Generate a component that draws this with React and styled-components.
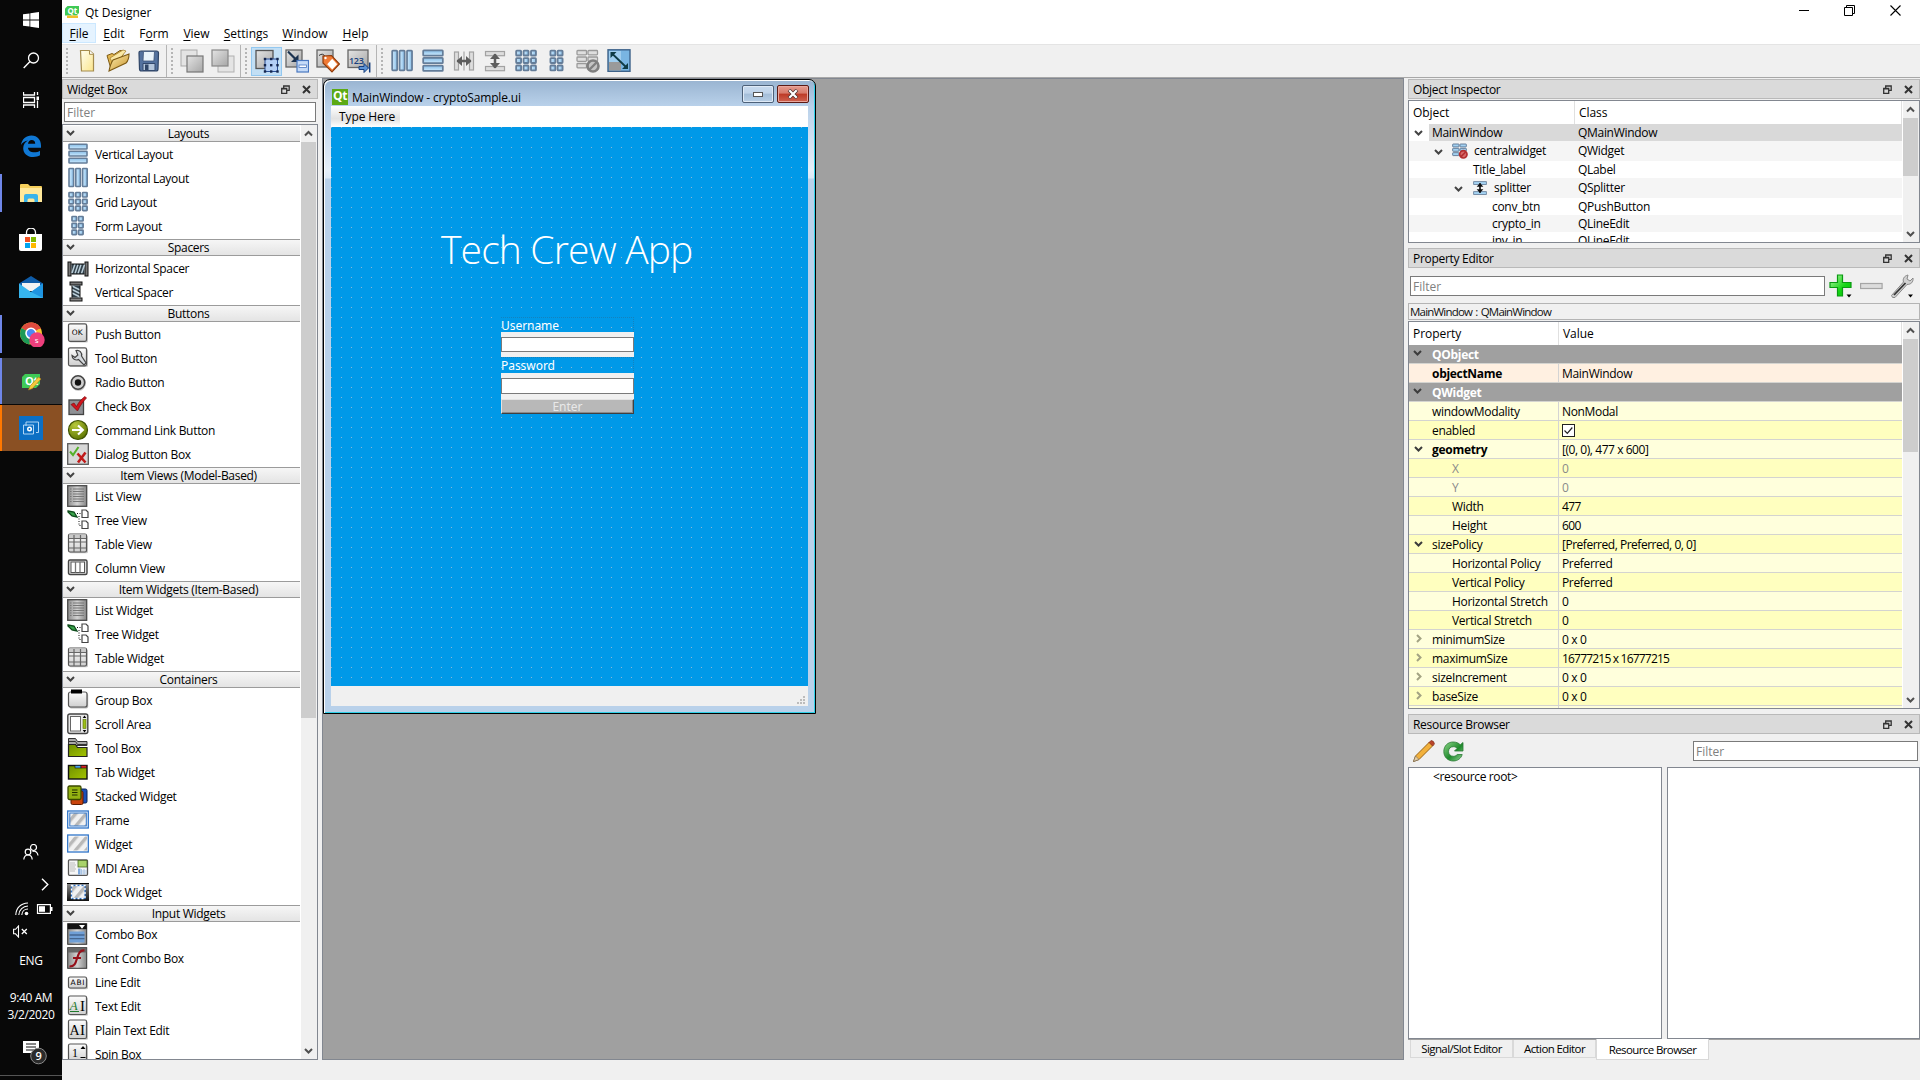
import React from "react";
import styled, { createGlobalStyle, css } from "styled-components";

const UI = `"Open Sans", "Noto Sans", sans-serif`;

const GlobalStyle = createGlobalStyle`
  *, *::before, *::after { box-sizing: border-box; }
  html, body { margin: 0; padding: 0; background: #f0f0f0; overflow: hidden; }
  body { font-family: ${UI}; font-size: 12px; letter-spacing: -0.3px; color: #000; line-height: 16px; }
  svg { display: block; flex: none; }
`;

/* ---------- shared svg gradients ---------- */
const Defs = () => (
  <svg width="0" height="0">
    <defs>
      <linearGradient id="bar" x1="0" y1="0" x2="0" y2="1">
        <stop offset="0" stopColor="#86bce6" /><stop offset="1" stopColor="#cdebff" />
      </linearGradient>
      <linearGradient id="barH" x1="0" y1="0" x2="1" y2="0">
        <stop offset="0" stopColor="#d3edff" /><stop offset="1" stopColor="#86bce6" />
      </linearGradient>
      <linearGradient id="grey" x1="0" y1="0" x2="1" y2="1">
        <stop offset="0" stopColor="#e4e4e4" /><stop offset="1" stopColor="#a6a6a6" />
      </linearGradient>
      <linearGradient id="light" x1="0" y1="0" x2="0" y2="1">
        <stop offset="0" stopColor="#fdfdfd" /><stop offset="1" stopColor="#cfcfcf" />
      </linearGradient>
      <linearGradient id="gold" x1="0" y1="0" x2="1" y2="1">
        <stop offset="0" stopColor="#fdeeb0" /><stop offset="1" stopColor="#c8922a" />
      </linearGradient>
      <linearGradient id="page" x1="0" y1="0" x2="1" y2="1">
        <stop offset="0" stopColor="#fffef0" /><stop offset="1" stopColor="#fbe58c" />
      </linearGradient>
      <linearGradient id="green" x1="0" y1="0" x2="1" y2="1">
        <stop offset="0" stopColor="#8fd88a" /><stop offset="0.55" stopColor="#1f8a2c" /><stop offset="1" stopColor="#9ad79a" />
      </linearGradient>
      <linearGradient id="plus" x1="0" y1="0" x2="1" y2="1">
        <stop offset="0" stopColor="#b6f5a8" /><stop offset="0.6" stopColor="#15d615" /><stop offset="1" stopColor="#06b806" />
      </linearGradient>
      <linearGradient id="olive" x1="0" y1="0" x2="1" y2="1">
        <stop offset="0" stopColor="#6f8f00" /><stop offset="1" stopColor="#a3c400" />
      </linearGradient>
      <linearGradient id="listGrey" x1="0" y1="0" x2="1" y2="0">
        <stop offset="0" stopColor="#8c8c8c" /><stop offset="0.5" stopColor="#d2d2d2" /><stop offset="1" stopColor="#858585" />
      </linearGradient>
      <linearGradient id="dark" x1="0" y1="0" x2="0" y2="1">
        <stop offset="0" stopColor="#8e8e8e" /><stop offset="1" stopColor="#111" />
      </linearGradient>
      <radialGradient id="olivBall" cx="0.35" cy="0.25" r="0.8">
        <stop offset="0" stopColor="#b6c83a" /><stop offset="1" stopColor="#5c7300" />
      </radialGradient>
      <pattern id="stripe" width="8" height="8" patternUnits="userSpaceOnUse" patternTransform="rotate(40)">
        <rect width="8" height="8" fill="#f1f1f1" /><rect width="3.4" height="8" fill="#b8b8b8" />
      </pattern>
    </defs>
  </svg>
);

/* ---------- layout glyphs ---------- */
const EDGE = "#647d99";
const LayV = ({ s = 22 }) => (
  <svg width={s} height={s} viewBox="0 0 22 22">
    {[1.2, 8.2, 15.2].map((y) => <rect key={y} x="2" y={y} width="18" height="4.8" rx="0.6" fill="url(#bar)" stroke={EDGE} strokeWidth="1.600" />)}
  </svg>
);
const LayH = ({ s = 22 }) => (
  <svg width={s} height={s} viewBox="0 0 22 22">
    {[2, 8.8, 15.6].map((x) => <rect key={x} x={x} y="1.500" width="4.600" height="18" rx="0.600" fill="url(#barH)" stroke={EDGE} strokeWidth="1.600" />)}
  </svg>
);
const cells = (xs) => xs.flatMap((x) => [1.5, 8.3, 15.1].map((y) => (
  <rect key={x + "-" + y} x={x} y={y} width="4.500" height="4.500" rx="0.600" fill="url(#barH)" stroke={EDGE} strokeWidth="1.700" />
)));
const LayGrid = ({ s = 22 }) => <svg width={s} height={s} viewBox="0 0 22 22">{cells([2, 8.8, 15.6])}</svg>;
const LayForm = ({ s = 22 }) => <svg width={s} height={s} viewBox="0 0 22 22">{cells([5, 11.6])}</svg>;

/* ---------- widget box icons ---------- */
const I = ({ children }) => <svg width="22" height="22" viewBox="0 0 22 22">{children}</svg>;

const HSpacer = () => (
  <I>
    <rect x="1" y="5" width="3" height="14" fill="#777" stroke="#111" /><rect x="18" y="5" width="3" height="14" fill="#777" stroke="#111" />
    <rect x="4.5" y="7" width="13" height="10" fill="#31404a" />
    <path d="M5 16l3-9M8 16.500l3-9M11 16.500l3-9M14.500 16.500l3-9" stroke="#b9cdd8" strokeWidth="1.5" />
    <path d="M4.500 7h13M4.500 17h13" stroke="#111" />
  </I>
);
const VSpacer = () => (
  <I>
    <rect x="3" y="1" width="12" height="3" fill="#777" stroke="#111" /><rect x="3" y="17" width="12" height="3" fill="#888" stroke="#111" />
    <rect x="5" y="4.500" width="8" height="12" fill="#31404a" />
    <path d="M5 5l8 4M5 8.500l8 4M5 12l8 4" stroke="#b9cdd8" strokeWidth="1.5" />
    <path d="M5 4.500v12M13 4.500v12" stroke="#111" />
  </I>
);
const Plate = ({ y = 1, h = 18.5 }) => (
  <>
    <rect x="2.500" y={y + 1.200} width="18.500" height={h} rx="1.500" fill="#00000038" />
    <rect x="1.500" y={y} width="18" height={h} rx="1.500" fill="url(#light)" stroke="#555" strokeWidth="1.200" />
  </>
);
const svgText = (t, x, y, size, extra = {}) => (
  <text x={x} y={y} fontSize={size} fontFamily="Liberation Serif, serif" letterSpacing="0" {...extra}>{t}</text>
);
const PushI = () => <I><Plate y={0.8} h={17.500} />{svgText("OK", 4.800, 12.300, 7.500, { fontFamily: "DejaVu Sans, sans-serif" })}</I>;
const WrenchI = () => (
  <I><Plate y={0.800} h={18} />
    <path d="M9 3.500a4.500 4.500 0 0 1 5.500 5.500l4.500 7-2 2-5.500-5.500a4.500 4.500 0 0 1-6.500-4l3 2 2.800-2.500z" fill="#d5d9dd" stroke="#444" strokeWidth="1.200" />
  </I>
);
const RadioI = () => (
  <I><circle cx="11.500" cy="12.500" r="7.500" fill="#0003" /><circle cx="11" cy="11.500" r="6.700" fill="#cfcfcf" stroke="#444" strokeWidth="1.600" /><circle cx="11" cy="11.500" r="3.200" fill="#111" /></I>
);
const CheckI = () => (
  <I><rect x="2" y="5" width="14.500" height="14.500" fill="#8e9094" stroke="#444" strokeWidth="1.300" />
    <path d="M4 9.500l3-1.500 2.500 3.500C12 6.500 15 3.500 18 1.500l1.500 1.500C16 6.500 13 11 10.500 16z" fill="#d1141c" stroke="#7b0a0e" strokeWidth="0.700" /></I>
);
const CommandI = () => (
  <I><circle cx="11" cy="11" r="9.500" fill="url(#olivBall)" stroke="#3f5200" strokeWidth="1.200" />
    <path d="M5 11h10M11 6.500l4.800 4.500-4.800 4.500" fill="none" stroke="#fff" strokeWidth="2.200" /></I>
);
const DialogI = () => (
  <I><rect x="0.700" y="0.700" width="20.600" height="20.600" fill="#d8d8d8" stroke="#5a5a5a" strokeWidth="1.300" />
    <path d="M3 8.500l3 3.500 5.500-8" fill="none" stroke="#55b02a" strokeWidth="2" />
    <path d="M10.500 10.500l8 9M18.500 9.500l-7.500 10" stroke="#c01a1a" strokeWidth="2.600" /></I>
);
const ListI = () => (
  <I><rect x="0.700" y="0.700" width="19" height="20.600" fill="url(#listGrey)" stroke="#4a4a4a" strokeWidth="1.300" />
    {[4, 6.500, 9, 11.500, 14, 16.500].map((y) => <path key={y} d={`M3 ${y}h1.500M6 ${y}h11`} stroke="#777" />)}</I>
);
const TreeI = () => (
  <I><path d="M1 2l6 1 3 5-5-1-4-4z" fill="#39a34a" stroke="#0d4a1b" strokeWidth="1.300" />
    <path d="M10 4.500h5M12 7v9.500h3" stroke="#111" strokeDasharray="1 1.500" fill="none" />
    <path d="M15 1h4l2 2v5.500h-6zM15 12h4l2 2v5.500h-6z" fill="#fff" stroke="#444" strokeWidth="1.200" /></I>
);
const TableI = () => (
  <I><Plate y={1} h={18} /><rect x="2" y="1.500" width="17" height="4" fill="#c9c9c9" />
    <path d="M2 5.500h17M2 9h17M2 15h17M7 2v17M13.500 2v17" stroke="#666" strokeWidth="1.200" /></I>
);
const ColumnI = () => (
  <I><rect x="1.500" y="3" width="18.500" height="14.500" rx="1.500" fill="#ddd" stroke="#444" strokeWidth="1.400" />
    <rect x="4" y="5" width="13.500" height="10.500" fill="#fff" stroke="#555" /><path d="M8.500 5v10.500M13 5v10.500" stroke="#777" strokeWidth="1.300" /></I>
);
const GroupI = () => (
  <I><rect x="2.200" y="4" width="19" height="15.500" rx="2" fill="#0004" /><rect x="1.500" y="3" width="18.500" height="15" rx="2" fill="url(#light)" stroke="#555" strokeWidth="1.200" /><rect x="4" y="0.500" width="11" height="4" fill="#000" /></I>
);
const ScrollI = () => (
  <I><rect x="0.800" y="1" width="20" height="19.500" rx="2" fill="#e8e8e8" stroke="#444" strokeWidth="1.400" />
    <rect x="3.500" y="3.500" width="10" height="14.500" fill="#fff" stroke="#666" />
    <rect x="16" y="6.500" width="3" height="9" fill="#9cbf1a" stroke="#587000" strokeWidth="0.600" />
    <path d="M15.700 5l1.800-2.500 1.800 2.500zM15.700 17l1.800 2.500 1.800-2.500z" fill="#000" /></I>
);
const ToolBoxI = () => (
  <I><path d="M1.500 1.500h7l2 3h9.500v4h-18.500z" fill="#aaa" stroke="#333" /><path d="M1.500 4.500h7l2 3h9.500" fill="none" stroke="#333" />
    <path d="M1.500 7.500h7l2 3h9.500v9h-18.500z" fill="url(#olive)" stroke="#222" strokeWidth="1.200" /></I>
);
const TabI = () => (
  <I><rect x="1.500" y="4.500" width="18.500" height="13.500" fill="url(#olive)" stroke="#111" strokeWidth="1.400" />
    <rect x="8" y="4.500" width="6" height="2.500" fill="#4aa3ea" stroke="#111" strokeWidth="0.600" /><rect x="14" y="4.500" width="5.500" height="2.500" fill="#d62020" stroke="#111" strokeWidth="0.600" /></I>
);
const StackI = () => (
  <I><rect x="9" y="4" width="11" height="14" rx="1.500" fill="#1b4fb8" stroke="#0a2357" /><rect x="4" y="6" width="12" height="13.500" rx="1.500" fill="#c9430c" stroke="#5c1c00" />
    <rect x="1" y="1" width="13" height="13.500" rx="1.500" fill="#93b312" stroke="#3b4a00" strokeWidth="1.300" /><path d="M5 5h5.500M5 7.500h5.500M5 10h5.500" stroke="#223000" strokeWidth="1.200" /></I>
);
const FrameI = () => (
  <I><rect x="0.700" y="2" width="20.600" height="17" fill="#fff" stroke="#2f74c8" strokeWidth="1.300" /><rect x="2.800" y="4" width="16.500" height="13" fill="url(#stripe)" stroke="#2f74c8" /></I>
);
const WidgetI = () => (
  <I><rect x="0.700" y="2" width="20.600" height="17" fill="#fff" stroke="#2f74c8" strokeWidth="1.300" /><rect x="2" y="3.500" width="18" height="14" fill="url(#stripe)" /></I>
);
const MdiI = () => (
  <I><rect x="1.500" y="2.800" width="19" height="15.500" rx="1" fill="#f6f6f6" stroke="#555" strokeWidth="1.300" />
    <rect x="11" y="3.500" width="9" height="6.500" fill="#a9d36a" stroke="#4a6a24" strokeWidth="0.800" /><path d="M3 6h5M3 8h6M3 10h5M3 12h6M3 14h5" stroke="#bbb" />
    <rect x="11" y="11.500" width="2.500" height="6" fill="#7fa9dd" /><path d="M14.500 12v6M17 12v6M14 14h6M14 16h6" stroke="#9fbde0" strokeWidth="0.800" /></I>
);
const DockI = () => (
  <I><rect x="0" y="2" width="22" height="18" fill="url(#dark)" /><path d="M0 2.500h22" stroke="#000" /><rect x="4.500" y="4.500" width="13.500" height="13" fill="url(#stripe)" stroke="#2f74c8" strokeWidth="1.200" />
    <rect x="4.500" y="4.500" width="13.500" height="13" fill="none" stroke="#fff" strokeWidth="1.300" strokeDasharray="2 2" /></I>
);
const ComboI = () => (
  <I><rect x="0.700" y="0.700" width="19" height="20.600" fill="url(#listGrey)" stroke="#333" /><rect x="0.700" y="0.700" width="19" height="5.500" fill="#111" /><path d="M12 2h6l-3 3.800z" fill="#fff" />
    <rect x="2.500" y="8.500" width="15" height="11" fill="#6f9fd6" /><path d="M2.500 12h15M2.500 15.700h15" stroke="#456791" strokeWidth="1.300" /></I>
);
const FontI = () => (
  <I><rect x="0.700" y="0.700" width="19" height="20.600" fill="url(#listGrey)" stroke="#333" /><rect x="1" y="1" width="18.500" height="4.500" fill="#666" />
    <path d="M2.500 19.500c5 0 6-3 7.500-8s3-8.500 7.500-8M6 11h8" fill="none" stroke="#96101a" strokeWidth="2.200" /></I>
);
const LineEditI = () => (
  <I><Plate y={6} h={11} />{svgText("ABI", 3.500, 14.300, 7.500, { fontFamily: "DejaVu Sans, sans-serif", textLength: 14 })}</I>
);
const TextI = () => <I><Plate y={1} />{svgText("A", 2.800, 14.500, 13, { fill: "#1f7a2c", fontStyle: "italic" })}<path d="M3 16.500h9" stroke="#1f7a2c" />{svgText("I", 13, 15.500, 15)}</I>;
const PlainI = () => <I><Plate y={1} />{svgText("A", 2.500, 15.500, 14)}{svgText("I", 13, 15.500, 15)}</I>;
const SpinI = () => <I><Plate y={1} />{svgText("1", 5, 13.500, 12)}<path d="M13.500 6h5l-2.500-3z" fill="#000" /><path d="M13.500 14.500h5" stroke="#000" /></I>;

/* ---------- toolbar icons ---------- */
const T = ({ children }) => <svg width="24" height="24" viewBox="0 0 24 24">{children}</svg>;
const NewI = () => <T><path d="M5.500 1.500h9l4 3.500v17h-12z" fill="url(#page)" stroke="#a48b4e" strokeWidth="1.200" /><path d="M14.500 1.500v3.800h4" fill="#fff" stroke="#a48b4e" /></T>;
const OpenI = () => (
  <T><path d="M1 6.500l5-2 2 1 6-4 3 .5v4L5 20z" fill="#e2b650" stroke="#7d5a14" /><path d="M4 9l13-8 3 1-12 15z" fill="#f9e7a4" stroke="#a17a24" strokeWidth="0.700" />
    <path d="M3 22c1-5 2-8 4-11l16-6c0 4-1 7-3 9z" fill="url(#gold)" stroke="#7d5a14" strokeWidth="1.100" /></T>
);
const SaveI = () => (
  <T><path d="M2 4q0-2 2-2h15.500q2 0 2 2l-.5 16q0 2-2 2H4.500q-2 0-2-2z" fill="#54729f" stroke="#2f4567" strokeWidth="1.200" />
    <path d="M6.500 2.500h11l-.6 9.500H6z" fill="#e9f3fb" stroke="#3c5479" strokeWidth="0.800" /><path d="M6 14.500h12v7H6z" fill="#b4c6dc" stroke="#33496d" /><rect x="8" y="15.500" width="3.500" height="5.500" fill="#2f4567" /></T>
);
const FrontI = () => <T><rect x="1" y="1" width="16" height="16" fill="#e4e4e4" stroke="#a9a9a9" /><rect x="7" y="7" width="16" height="16" fill="url(#grey)" stroke="#777" strokeWidth="1.200" /></T>;
const BackI = () => <T><rect x="7" y="7" width="16" height="16" fill="#e4e4e4" stroke="#b0b0b0" /><rect x="1" y="1" width="16" height="16" fill="url(#grey)" stroke="#888" strokeWidth="1.200" /></T>;
const EditWI = () => (
  <T><rect x="1" y="1.500" width="17" height="18" fill="url(#grey)" stroke="#555" strokeWidth="1.300" /><rect x="10" y="10" width="12.500" height="12.500" fill="#b3cff5" stroke="#2a4f93" />
    {[[10, 10], [16.2, 10], [22.5, 10], [10, 16.2], [16.2, 16.2], [22.5, 16.2], [10, 22.5], [16.2, 22.5], [22.5, 22.5]].map(([x, y]) => <rect key={x + "," + y} x={x - 1.2} y={y - 1.2} width="2.400" height="2.400" fill="#14264e" />)}</T>
);
const SignalI = () => (
  <T><rect x="1" y="1" width="16" height="17" fill="url(#grey)" stroke="#666" strokeWidth="1.300" /><path d="M3 2.500l8.500 8.500" stroke="#1c3350" strokeWidth="2.200" /><path d="M13.500 13V5.500L6 13z" fill="#1c3350" />
    <rect x="12" y="11.500" width="11.500" height="11.500" fill="#c5dbf8" stroke="#4a78c0" strokeWidth="1.200" /><rect x="14" y="16" width="7.500" height="2.500" fill="#fff" stroke="#4a78c0" strokeWidth="0.800" /></T>
);
const BuddyI = () => (
  <T><rect x="1" y="1" width="16" height="17" fill="url(#grey)" stroke="#666" strokeWidth="1.300" /><path d="M3 6.500q4-3 6 1" fill="none" stroke="#333" /><path d="M7 7l8.500-.5 8 8.500-7.500 8-9-9z" fill="#f07a35" stroke="#8c3a0c" strokeWidth="1.200" /><path d="M16.200 9.800l5 5.400-5 5.400-5-5.400z" fill="#fff" /><circle cx="9.500" cy="9" r="1.200" fill="#fff" /></T>
);
const TabOrderI = () => (
  <T><rect x="1" y="1" width="20" height="17.500" fill="url(#grey)" stroke="#666" strokeWidth="1.300" /><text x="2" y="14.500" fontSize="9" fontWeight="600" letterSpacing="-0.300" fontFamily="Open Sans, sans-serif" fill="#173f7e">123</text>
    <path d="M12 17.500h5v-3l4.500 4.500-4.500 4.500v-3h-5z" fill="#5b93d6" stroke="#173f7e" /><path d="M22.700 13.500v10" stroke="#173f7e" strokeWidth="1.500" /></T>
);
const SplitHI = () => (
  <T><rect x="2.500" y="3" width="4" height="18" fill="#ddd" stroke="#a2a2a2" strokeWidth="1.200" /><rect x="17.500" y="3" width="4" height="18" fill="#ddd" stroke="#a2a2a2" strokeWidth="1.200" />
    <path d="M12 2.500v19" stroke="#c4c4c4" strokeWidth="2" /><path d="M5 12h14" stroke="#5d5d5d" strokeWidth="2.500" /><path d="M10 7v10l-5.500-5zM14 7v10l5.500-5z" fill="#5d5d5d" /></T>
);
const SplitVI = ({ s = 24, blue }) => (
  <svg width={s} height={s} viewBox="0 0 24 24"><rect x="2.500" y="2.500" width="19" height="4.200" fill={blue ? "#a4d2f2" : "#ddd"} stroke={blue ? "#5f7894" : "#a2a2a2"} strokeWidth="1.200" /><rect x="2.500" y="17.500" width="19" height="4.200" fill={blue ? "#a4d2f2" : "#ddd"} stroke={blue ? "#5f7894" : "#a2a2a2"} strokeWidth="1.200" />
    <path d="M12 5v14" stroke={blue ? "#111" : "#5d5d5d"} strokeWidth="2.500" /><path d="M7 10h10l-5-5.500zM7 14h10l-5 5.500z" fill={blue ? "#111" : "#5d5d5d"} /></svg>
);
const BreakI = ({ s = 24, color }) => (
  <svg width={s} height={s} viewBox="0 0 24 24">
    {[[1, 1.500], [12, 1.500], [1, 8], [12, 8], [1, 14.500]].map(([x, y]) => <rect key={x + "," + y} x={x} y={y} width="9.500" height="4.400" rx="0.800" fill={color ? "#a4d2f2" : "#dedede"} stroke={color ? "#56708f" : "#9a9a9a"} strokeWidth="1.300" />)}
    <circle cx="17" cy="17" r="5.500" fill={color ? "#d86a6a" : "#c4c4c4"} stroke={color ? "#b32f2f" : "#7f7f7f"} strokeWidth="2.600" /><path d="M13.500 20.500l7-7" stroke={color ? "#b32f2f" : "#7f7f7f"} strokeWidth="2.400" />
  </svg>
);
const AdjustI = () => (
  <T><rect x="1" y="0.800" width="22" height="21.500" fill="#79b5e2" stroke="#3d6289" strokeWidth="1.400" /><rect x="2" y="13" width="12" height="8.500" fill="#9a9a9a" /><rect x="2" y="2" width="12" height="11" fill="#9fcdee" />
    <path d="M5 4.500l14.500 14" stroke="#0f3b45" strokeWidth="1.800" /><path d="M3.500 3v6l6-6zM21 20v-6l-6 6z" fill="#0f3b45" /></T>
);

/* ---------- small shared parts ---------- */
const Chevron = ({ dir = "down", color = "#444", s = 9, w = 2 }) => {
  const d = { down: "M1 3l3.500 3.500L8 3", up: "M1 6.500l3.500-3.500L8 6.500", right: "M3 1l3.500 3.500L3 8" }[dir];
  return <svg width={s} height={s} viewBox="0 0 9 9"><path d={d} fill="none" stroke={color} strokeWidth={w} /></svg>;
};

const Bar = styled.div`
  width: 16px; flex: none; background: #f0f0f0; display: flex; flex-direction: column; margin-left: 1px;
`;
const BarEnd = styled.div`
  height: 17px; flex: none; display: flex; align-items: center; justify-content: center; padding-right: 2px;
`;
const Thumb = styled.div`height: ${(p) => p.$h}px; background: #cdcdcd; margin-right: 1px;`;
const Spring = styled.div`flex: 1;`;
const ScrollBar = ({ thumb }) => (
  <Bar><BarEnd><Chevron dir="up" color="#505050" /></BarEnd><Thumb $h={thumb} /><Spring /><BarEnd><Chevron color="#505050" /></BarEnd></Bar>
);

const DockBar = styled.div`
  height: 20px; flex: none; background: #dadada; border: 1px solid #b9b9b9; display: flex; align-items: center;
  padding: 0 6px 0 4px; font-size: 12px;
  span { flex: 1; padding-top: 2px; }
  svg + svg { margin-left: 12px; }
`;
const DockTitle = ({ children }) => (
  <DockBar>
    <span>{children}</span>
    <svg width="9" height="9" viewBox="0 0 9 9"><path d="M2.700 3V.8h5.500v4.500H6M2.500 1h6" fill="none" stroke="#333" strokeWidth="1.300" /><path d="M.7 3.500h5v4.800h-5zM.5 3.800h5.500" fill="none" stroke="#333" strokeWidth="1.300" /></svg>
    <svg width="9" height="9" viewBox="0 0 9 9"><path d="M1 1l7 7M8 1L1 8" stroke="#333" strokeWidth="2" /></svg>
  </DockBar>
);
const Filter = styled.div`
  height: 20px; border: 1px solid #7a7a7a; background: #fff; color: #808080; display: flex; align-items: center; padding: 1px 0 0 2px;
  flex: ${(p) => (p.$w ? `none` : 1)}; width: ${(p) => (p.$w ? p.$w + "px" : "auto")}; letter-spacing: 0;
`;

/* ---------- page frame ---------- */
const Screen = styled.div`width: 1920px; height: 1080px; display: flex; overflow: hidden; background: #f0f0f0;`;
const AppFrame = styled.div`width: 1858px; display: flex; flex-direction: column;`;

/* ---------- taskbar ---------- */
const TaskBar = styled.div`
  width: 62px; flex: none; background: #080808; display: flex; flex-direction: column; color: #fff; align-items: center;
`;
const Sys = styled.div`height: ${(p) => p.$h || 40}px; width: 62px; display: flex; align-items: center; justify-content: center; flex: none; padding: ${(p) => p.$p || 0};`;
const Task = styled.div`
  height: 46px; width: 62px; margin-bottom: 1px; flex: none; display: flex; align-items: center; gap: 17px;
  background: ${(p) => p.$bg || "transparent"};
  &::before { content: ""; width: 2px; height: ${(p) => p.$mark || 38}px; background: ${(p) => p.$c || "transparent"}; }
`;
const Apps = styled.div`margin-top: 3px; display: flex; flex-direction: column;`;
const Tray = styled.div`margin-top: auto; display: flex; flex-direction: column; align-items: center; border-bottom: 1px solid #555; margin-bottom: 4px; height: 239px; width: 62px;`;
const Clock = styled.div`height: 34px; line-height: 17px; text-align: center; white-space: nowrap; letter-spacing: -0.400px; margin-top: 14px;`;

const TaskBarView = () => (
  <TaskBar>
    <Sys><svg width="16" height="16" viewBox="0 0 16 16"><path d="M0 2.300L6.500 1.400v6.200H0zM7.300 1.300L16 0v7.600H7.300zM0 8.400h6.500v6.200L0 13.700zM7.300 8.400H16V16l-8.700-1.300z" fill="#fff" /></svg></Sys>
    <Sys><svg width="17" height="17" viewBox="0 0 17 17"><circle cx="10.500" cy="6" r="5" fill="none" stroke="#fff" strokeWidth="1.300" /><path d="M7 9.500L.7 16" stroke="#fff" strokeWidth="1.400" /></svg></Sys>
    <Sys><svg width="16" height="16" viewBox="0 0 16 16"><path d="M.5 0v3h11V0M.5 16v-3h11v3M.5 5.500h11v5H.5zM14.500 0v3M14.500 8.500V16" fill="none" stroke="#fff" strokeWidth="1.300" /><rect x="13.500" y="4.500" width="2.500" height="3.500" fill="#fff" /></svg></Sys>
    <Apps>
      <Task><svg width="24" height="24" viewBox="0 0 24 24"><path d="M2 11C3 5 7 1.500 12.500 1.500c6 0 9.500 4.500 9.500 10v2.200H9c.2 3 3 4.600 6.200 4.600 2.300 0 4.300-.6 5.800-1.600v4.600c-1.800 1.100-4 1.700-6.700 1.700C8 23 4.200 19.300 4.200 14.200c0-3.500 2-6.200 4.800-7.700C6 6.800 3.500 8.500 2 11zm7-1.300h7.200c0-2.400-1.300-3.700-3.500-3.700-2 0-3.400 1.500-3.700 3.700z" fill="#1078d4" /></svg></Task>
      <Task $c="#6f86e8"><svg width="24" height="24" viewBox="0 0 24 24"><path d="M1 4q0-1 1-1h7l2 2h11q1 0 1 1v15H1z" fill="#f6cf5b" /><path d="M1 7h22v14H1z" fill="#ffe89a" /><path d="M5 21v-6q0-2 2-2h10q2 0 2 2v6h-3.500v-2q0-1.500-1.500-1.500h-4q-1.500 0-1.500 1.500v2z" fill="#38b3ea" /></svg></Task>
      <Task><svg width="24" height="24" viewBox="0 0 24 24"><path d="M7.500 7V4.500a4.500 4.500 0 0 1 9 0V7" fill="none" stroke="#fff" strokeWidth="1.300" /><path d="M0 6h23v15q0 2-2 2H2q-2 0-2-2z" fill="#fff" /><rect x="6" y="9" width="5" height="5" fill="#f25022" /><rect x="12" y="9" width="5" height="5" fill="#7fba00" /><rect x="6" y="15" width="5" height="5" fill="#00a4ef" /><rect x="12" y="15" width="5" height="5" fill="#ffb900" /></svg></Task>
      <Task><svg width="24" height="24" viewBox="0 0 24 24"><path d="M0 8.500L12 1l12 7.500V14H0z" fill="#0f5ca8" /><path d="M3 8h18v8H3z" fill="#f2f2f2" /><path d="M0 8.500L12 17 24 8.500V23H0z" fill="#36b5ee" /><path d="M12 17l12 6V8.500z" fill="#1e94e0" /></svg></Task>
      <Task $c="#6f86e8"><svg width="26" height="26" viewBox="0 0 26 26"><circle cx="12" cy="12.500" r="11" fill="#f7c52e" /><path d="M12 12.500L2.500 7A11 11 0 0 1 21.500 7z" fill="#de4b3f" /><path d="M12 12.500h0L2.500 7a11 11 0 0 0 8 16.400z" fill="#1c9a57" /><path d="M12 1.500A11 11 0 0 1 22 8H10z" fill="#de4b3f" /><circle cx="12" cy="12.300" r="5" fill="#4a8af4" stroke="#fff" strokeWidth="1.600" /><circle cx="18" cy="19" r="7.700" fill="#ee3f7c" /><text x="15.800" y="22" fontSize="8" fontFamily="Open Sans, sans-serif" fill="#fff">s</text></svg></Task>
      <Task $bg="#3b3b3b" $c="#6f86e8" $mark={46}><svg width="24" height="24" viewBox="0 0 24 24"><path d="M6 5h15v10l-4 4H3V8z" fill="#3fca56" /><text x="6" y="16" fontSize="11" fontWeight="700" fontFamily="Open Sans, sans-serif" fill="#fff">Qt</text><path d="M9.500 21l1.500-4L19.500 8l2.500 2-8.500 9.500z" fill="#f5c93b" stroke="#a47817" strokeWidth="0.600" /></svg></Task>
      <Task $bg="#8a5023" $c="#ff7800" $mark={46}><svg width="24" height="24" viewBox="0 0 24 24"><rect width="24" height="24" fill="#0b6fc4" /><path d="M7 10V6h12.500v10.500H17M4.500 9h10v9h-10z" fill="none" stroke="#bfe0fa" strokeWidth="0.900" /><circle cx="10.500" cy="13" r="2.500" fill="#fff" /><circle cx="10.500" cy="13" r="1" fill="#0b6fc4" /></svg></Task>
    </Apps>
    <Tray>
      <Sys $h={30}><svg width="16" height="16" viewBox="0 0 16 16"><circle cx="10.500" cy="3.500" r="3" fill="none" stroke="#fff" strokeWidth="1.200" /><circle cx="5" cy="8" r="2.800" fill="none" stroke="#fff" strokeWidth="1.200" /><path d="M.8 15.500c.3-3 2-4.500 4.200-4.500s4 1.500 4.200 4.500M9.500 7.500c3-1 5.200.8 5.500 4" fill="none" stroke="#fff" strokeWidth="1.200" /></svg></Sys>
      <Sys $h={35} $p="0 0 0 28px"><svg width="8" height="13" viewBox="0 0 8 13"><path d="M1 .7l5.800 5.800L1 12.300" fill="none" stroke="#fff" strokeWidth="1.400" /></svg></Sys>
      <Sys $h={14} $p="0 0 0 6px">
        <svg width="14" height="14" viewBox="0 0 14 14"><path d="M.8 13C1 6 6 1.200 13 1M3.800 13C4 8 8 4.200 13 4M6.800 13c.2-3.500 2.800-6 6.200-6" fill="none" stroke="#fff" strokeWidth="1.100" /><circle cx="11.500" cy="11.500" r="1.800" fill="#fff" /></svg>
        <svg width="24" height="10" viewBox="0 0 24 10"><path d="M8.500.6h12.900v8.800H8.500z" fill="none" stroke="#fff" strokeWidth="1.200" /><rect x="22" y="3" width="1.500" height="4" fill="#fff" /><rect x="10" y="2.200" width="6" height="5.600" fill="#fff" /></svg>
      </Sys>
      <Sys $h={31} $p="0 22px 0 0"><svg width="15" height="13" viewBox="0 0 15 13"><path d="M.6 4.300h2L5.500 1v11L2.600 8.800h-2z" fill="none" stroke="#fff" strokeWidth="1.100" /><path d="M8.800 4l5 5M13.800 4l-5 5" stroke="#fff" strokeWidth="1.300" /></svg></Sys>
      <Sys $h={28}>ENG</Sys>
      <Clock>9:40 AM<br />3/2/2020</Clock>
      <Sys $h={52} $p="7px 0 0 8px"><svg width="24" height="25" viewBox="0 0 24 25"><path d="M0 1h16v12h-4v4l-4-4H0z" fill="#fff" /><path d="M3 4h10M3 7h10M3 10h10" stroke="#111" strokeWidth="1.200" /><circle cx="15.500" cy="16" r="7.800" fill="#2b2b2b" stroke="#8a8a8a" /><text x="12.500" y="20" fontSize="11" fontWeight="600" fontFamily="Open Sans, sans-serif" fill="#fff">9</text></svg></Sys>
    </Tray>
  </TaskBar>
);

/* ---------- title, menu, toolbar ---------- */
const TitleBar = styled.div`
  height: 23px; flex: none; background: #fff; display: flex; align-items: center; padding: 1px 19px 0 3px; gap: 6px;
  span { flex: 1; letter-spacing: 0; padding-top: 1px; }
`;
const Controls = styled.div`display: flex; align-items: center; gap: 35px; margin-top: -4px;`;
const MenuBar = styled.div`height: 21px; flex: none; background: #fff; display: flex;`;
const MenuItem = styled.div`
  padding: 2px 0 0; height: 20px; width: ${(p) => p.$w}px; text-align: center; letter-spacing: 0;
  border: 1px solid ${(p) => (p.$on ? "#cce8ff" : "transparent")}; background: ${(p) => (p.$on ? "#e5f3ff" : "transparent")};
  line-height: 15px;
  u { text-underline-offset: 2px; text-decoration-thickness: 1px; }
`;
const ToolRow = styled.div`height: 34px; flex: none; display: flex; background: #f0f0f0; border-top: 1px solid #e4e4e4; border-bottom: 1px solid #a8a8a8;`;
const Group = styled.div`
  display: flex; align-items: center; padding: 0 1px 0 4px; border-right: ${(p) => (p.$last ? 0 : 1)}px solid #b4b4b4;
`;
const Grip = styled.div`width: 2px; height: 26px; margin-right: 4px; background: repeating-linear-gradient(#b5b5b5 0 2px, transparent 2px 4px);`;
const Tool = styled.div`
  width: 31px; height: 29px; display: flex; align-items: center; justify-content: center; padding-right: 2px;
  ${(p) => p.$on && css`background: #c2dff5; border: 1px solid #93c8f0; padding-right: 0;`}
`;
const toolGroups = [
  [NewI, OpenI, SaveI],
  [FrontI, BackI],
  [EditWI, SignalI, BuddyI, TabOrderI],
  [LayH, LayV, SplitHI, SplitVI, LayGrid, LayForm, BreakI, AdjustI],
];

/* ---------- widget box ---------- */
const Main = styled.div`flex: 1; min-height: 0; display: flex;`;
const WidgetDock = styled.div`width: 256px; flex: none; display: flex; flex-direction: column; padding-top: 1px;`;
const FilterRow = styled.div`height: 25px; flex: none; padding: 3px 2px 2px; display: flex;`;
const Box = styled.div`flex: 1; min-height: 0; border: 1px solid #828790; background: #fff; display: flex; overflow: hidden;`;
const List = styled.div`flex: 1; overflow: hidden;`;
const Category = styled.div`
  height: 17px; margin-bottom: 1px; border-top: 1px solid ${(p) => (p.$first ? "#fff" : "#9b9b9b")}; border-bottom: 1px solid #9b9b9b;
  background: linear-gradient(#f6f6f6, #e4e4e4); display: flex; align-items: flex-start; padding: 0 0 0 3px; letter-spacing: -0.300px;
  svg { margin-top: 2px; }
  span { flex: 1; text-align: center; padding-left: 2px; line-height: 16px; }
`;
const Item = styled.div`
  height: 24px; display: flex; padding-left: 4px; gap: 6px; line-height: 23px; white-space: nowrap;
`;
const widgets = [
  ["Layouts", [["Vertical Layout", LayV], ["Horizontal Layout", LayH], ["Grid Layout", LayGrid], ["Form Layout", LayForm]]],
  ["Spacers", [["Horizontal Spacer", HSpacer], ["Vertical Spacer", VSpacer]]],
  ["Buttons", [["Push Button", PushI], ["Tool Button", WrenchI], ["Radio Button", RadioI], ["Check Box", CheckI], ["Command Link Button", CommandI], ["Dialog Button Box", DialogI]]],
  ["Item Views (Model-Based)", [["List View", ListI], ["Tree View", TreeI], ["Table View", TableI], ["Column View", ColumnI]]],
  ["Item Widgets (Item-Based)", [["List Widget", ListI], ["Tree Widget", TreeI], ["Table Widget", TableI]]],
  ["Containers", [["Group Box", GroupI], ["Scroll Area", ScrollI], ["Tool Box", ToolBoxI], ["Tab Widget", TabI], ["Stacked Widget", StackI], ["Frame", FrameI], ["Widget", WidgetI], ["MDI Area", MdiI], ["Dock Widget", DockI]]],
  ["Input Widgets", [["Combo Box", ComboI], ["Font Combo Box", FontI], ["Line Edit", LineEditI], ["Text Edit", TextI], ["Plain Text Edit", PlainI], ["Spin Box", SpinI]]],
];

/* ---------- canvas ---------- */
const Mdi = styled.div`
  width: 1082px; margin-left: 4px; flex: none; background: #a0a0a0; border: 1px solid #828790; display: flex; align-items: flex-start;
`;
const Win = styled.div`
  width: 493px; height: 635px; border: 1px solid #000; border-radius: 7px 7px 0 0; display: flex; flex-direction: column;
  padding: 0 7px 7px; box-shadow: inset 1px 1px 0 #fff, inset -1px -1px 0 #2fd0e8;
  background: linear-gradient(#99b4d1, #b9d1ea 26px, #e6eff9 90px, #dce9f6 98px, #b9d1ea 99px);
`;
const WinTitle = styled.div`
  height: 26px; flex: none; display: flex; align-items: flex-start; padding-top: 9px; gap: 4px; letter-spacing: -0.180px;
  span { flex: 1; padding-top: 1px; }
`;
const QtLogo = styled.div`
  width: 16px; height: 16px; background: #5caa15; color: #fff; font-weight: 700; font-size: 12px; line-height: 14px; text-align: center; letter-spacing: -0.500px; margin-left: 1px;
`;
const WinBtn = styled.div`
  width: 32px; height: 18px; margin: -4px -1px 0 0; border-radius: 2px; border: 1px solid ${(p) => (p.$red ? "#5c1a14" : "#4d6179")}; display: flex; align-items: center; justify-content: center;
  box-shadow: inset 0 0 0 1px ${(p) => (p.$red ? "#e9a79d" : "#dfeaf6")};
  background: ${(p) => (p.$red ? "linear-gradient(#e59b8e, #d77a6a 45%, #bd3a26 50%, #cf6350)" : "linear-gradient(#c8dbef, #bfd3e9 45%, #a3bdd8 50%, #b8cfe6)")};
`;
const FormMenu = styled.div`
  height: 21px; flex: none; background: #fff; display: flex;
  span { width: 69px; padding: 3px 0 0 8px; letter-spacing: -0.350px; letter-spacing: -0.100px; background: linear-gradient(#fff 0%, #e2e2e2 60%, #fff 100%); }
`;
const Canvas = styled.div`
  height: 559px; flex: none; display: flex; flex-direction: column; align-items: flex-start; color: #fff;
  background: radial-gradient(circle at 0.500px 0.500px, #8cb6cf 0.700px, transparent 0.750px) 0 0 / 10px 10px, #0099e8;
`;
const Heading = styled.div`
  margin: 92px 0 0 110px; height: 60px; line-height: 60px; font-size: 39px; font-weight: 300; letter-spacing: -0.850px; white-space: nowrap;
`;
const Splitter = styled.div`margin: 38px 0 0 170px; width: 133px; display: flex; flex-direction: column;`;
const Label = styled.div`
  height: ${(p) => p.$h}px; line-height: ${(p) => p.$h}px; border-top: 1px dotted #1482bd; border-right: 1px dotted #1482bd; font-family: "Noto Sans", sans-serif; font-size: 12px; letter-spacing: -0.050px;
`;
const Field = styled.div`height: ${(p) => p.$h}px; background: #f0f0f0; padding: 5px 0; display: flex; &::before { content: ""; flex: 1; background: #fff; border: 1px solid #7a7a7a; }`;
const Enter = styled.div`
  height: 15px; background: #b8b8b8; border: 1px solid; border-color: #e3e3e3 #404040 #404040 #e3e3e3; box-shadow: inset -1px -1px 0 #8a8a8a; text-align: center; line-height: 14px; color: #e8e8e8; font-family: "Noto Sans", sans-serif; letter-spacing: 0;
`;
const FormStatus = styled.div`
  height: 20px; flex: none; background: #f0f0f0; display: flex; align-items: flex-end; justify-content: flex-end; padding: 0 3px 2px;
`;

/* ---------- right column ---------- */
const Right = styled.div`flex: 1; margin-left: 4px; display: flex; flex-direction: column; padding-top: 1px;`;
const Tree = styled.div`height: 143px; margin-top: 1px; flex: none; border: 1px solid #828790; background: #fff; display: flex; overflow: hidden;`;
const Head = styled.div`
  height: 23px; display: flex; line-height: 24px; letter-spacing: -0.050px; background: #fff; border-right: 1px solid #e0e0e0;
  span:first-child { width: ${(p) => p.$w}px; padding-left: 4px; border-right: 1px solid #e0e0e0; }
  span + span { padding-left: 4px; }
`;
const Node = styled.div`
  height: ${(p) => p.$h}px; line-height: ${(p) => p.$h}px; display: flex; align-items: center; padding-left: ${(p) => p.$in}px; white-space: nowrap;
  background: ${(p) => (p.$sel ? "linear-gradient(90deg, #fff 20px, #d9d9d9 20px)" : p.$alt ? "#f5f5f5" : "#fff")};
`;
const NodeName = styled.div`width: ${(p) => 169 - p.$in}px; flex: none; display: flex; align-items: center; svg:first-child { margin-right: 9px; } svg + svg { margin-right: 6px; }`;
const nodes = [
  ["MainWindow", "QMainWindow", 17, 5, true, null],
  ["centralwidget", "QWidget", 20, 25, true, <BreakI s={16} color />],
  ["Title_label", "QLabel", 17, 64],
  ["splitter", "QSplitter", 20, 45, true, <SplitVI s={16} blue />],
  ["conv_btn", "QPushButton", 17, 83],
  ["crypto_in", "QLineEdit", 17, 83],
  ["inv_in", "QLineEdit", 17, 83],
];

const PropTools = styled.div`height: 35px; flex: none; display: flex; align-items: center; padding: 1px 5px 0 2px;`;
const ToolGap = styled.div`width: ${(p) => p.$w}px; flex: none;`;
const ObjectLine = styled.div`height: 17px; flex: none; border: 1px solid #b4b4b4; line-height: 15px; padding-left: 1px; font-size: 11.500px; letter-spacing: -0.800px; word-spacing: 1px; color: #111;`;
const Props = styled(Tree)`height: 388px;`;
const shade = { group: "#a0a0a0", name: "#fff0e1", a: "#ffffdc", b: "#ffffbf" };
const Row = styled.div`
  height: 19px; display: flex; border-bottom: 1px solid #d4d4d0; line-height: 19px; background: ${(p) => shade[p.$k]}; color: ${(p) => (p.$dim ? "#8a8a8a" : "#000")}; white-space: nowrap;
`;
const Twist = styled.div`width: 23px; flex: none; padding: ${(p) => (p.$up ? 3 : 4)}px 0 0 ${(p) => (p.$up ? 4 : 5)}px;`;
const PName = styled.div`
  width: ${(p) => (p.$wide ? 300 : 127)}px; flex: none; padding-left: ${(p) => (p.$child ? 20 : 0)}px;
  border-right: ${(p) => (p.$wide ? 0 : 1)}px solid #d4d4d4; font-weight: ${(p) => (p.$bold ? 700 : 400)}; color: ${(p) => (p.$wide ? "#fff" : "inherit")};
`;
const PVal = styled.div`padding-left: 3px; display: flex; align-items: center; letter-spacing: ${(p) => p.$ls ?? -0.35}px;`;
const props = [
  ["group", "QObject", null, "down"],
  ["name", "objectName", "MainWindow", null, { bold: 1, ls: -0.3 }],
  ["group", "QWidget", null, "down"],
  ["a", "windowModality", "NonModal"],
  ["b", "enabled", "check"],
  ["a", "geometry", "[(0, 0), 477 x 600]", "down", { bold: 1, ls: -0.44 }],
  ["b", "X", "0", null, { child: 1, dim: 1 }],
  ["a", "Y", "0", null, { child: 1, dim: 1 }],
  ["b", "Width", "477", null, { child: 1, ls: -0.6 }],
  ["a", "Height", "600", null, { child: 1, ls: -0.6 }],
  ["b", "sizePolicy", "[Preferred, Preferred, 0, 0]", "down", { ls: -0.48 }],
  ["a", "Horizontal Policy", "Preferred", null, { child: 1 }],
  ["b", "Vertical Policy", "Preferred", null, { child: 1 }],
  ["a", "Horizontal Stretch", "0", null, { child: 1 }],
  ["b", "Vertical Stretch", "0", null, { child: 1 }],
  ["a", "minimumSize", "0 x 0", "right"],
  ["b", "maximumSize", "16777215 x 16777215", "right", { ls: -0.8 }],
  ["a", "sizeIncrement", "0 x 0", "right"],
  ["b", "baseSize", "0 x 0", "right"],
  ["a", "", "", null],
];
const CheckMark = () => <svg width="13" height="13" viewBox="0 0 13 13"><rect x="0.500" y="0.500" width="12" height="12" fill="#fff" stroke="#222" /><path d="M2.500 6.500l2.800 2.800 5-5.800" fill="none" stroke="#222" strokeWidth="1.200" /></svg>;

const ResTools = styled.div`height: 33px; flex: none; display: flex; align-items: center; padding: 1px 2px 0 5px; gap: 8px;`;
const Panes = styled.div`height: 272px; flex: none; display: flex; gap: 5px;`;
const Pane = styled.div`width: ${(p) => p.$w}px; background: #fff; border: 1px solid #828790; padding: 1px 0 0 24px; letter-spacing: -0.350px;`;
const Tabs = styled.div`display: flex; align-items: flex-start; padding-left: 2px; border-top: 1px solid #a0a0a0;`;
const Tab = styled.div`
  width: ${(p) => p.$w}px; height: ${(p) => (p.$on ? 21 : 18)}px; margin-top: ${(p) => (p.$on ? -1 : 0)}px; line-height: ${(p) => (p.$on ? 22 : 18)}px; text-align: center; background: ${(p) => (p.$on ? "#fff" : "#f0f0f0")};
  border: 1px solid #d9d9d9; border-top: 0; font-size: 11.500px; letter-spacing: -0.600px; white-space: nowrap;
`;
const StatusBar = styled.div`height: 20px; flex: none;`;
const Part = styled.div`display: flex; flex-direction: column; flex: none; margin-top: 5px;`;

const PropertyPart = () => (
  <Part>
    <DockTitle>Property Editor</DockTitle>
    <PropTools>
      <Filter $w={415}>Filter</Filter>
      <ToolGap $w={4} />
      <svg width="24" height="24" viewBox="0 0 24 24"><path d="M8.500 1h5v7.500H22v5h-8.500V22h-5v-8.500H1v-5h7.500z" fill="url(#plus)" stroke="#0a9a12" strokeWidth="1.200" /><path d="M17.500 20.500h5l-2.500 3z" fill="#000" /></svg>
      <ToolGap $w={7} />
      <svg width="23" height="24" viewBox="0 0 23 24"><rect x="0.600" y="9.500" width="21.500" height="5" fill="#dcdcdc" stroke="#a5a5a5" strokeWidth="1.200" /></svg>
      <ToolGap $w={7} />
      <svg width="24" height="25" viewBox="0 0 24 25"><path d="M1.500 21.500L13.500 8c-1-3 .5-6 4.500-7l-1 4 3 2 3-3c.5 4-2 6.500-6 6.500L5 23.500q-3 1-3.500-2z" fill="#d0d0d0" stroke="#888" strokeWidth="1" /><path d="M4 21L15.500 9" stroke="#333" strokeWidth="1.800" /><path d="M18 20.500h5l-2.500 3z" fill="#000" /></svg>
    </PropTools>
    <ObjectLine>MainWindow : QMainWindow</ObjectLine>
    <Props>
      <List>
        <Head $w={150}><span>Property</span><span>Value</span></Head>
        {props.map(([k, name, value, tw, o = {}], i) => (
          <Row key={i} $k={k} $dim={o.dim}>
            <Twist $up={k === "group"}>{tw && <Chevron dir={tw} color={tw === "right" ? "#a3a383" : "#3c3c3c"} />}</Twist>
            <PName $wide={k === "group"} $bold={o.bold || k === "group"} $child={o.child}>{name}</PName>
            {value && <PVal $ls={o.ls}>{value === "check" ? <CheckMark /> : value}</PVal>}
          </Row>
        ))}
      </List>
      <ScrollBar thumb={113} />
    </Props>
  </Part>
);

const ResourcePart = () => (
  <Part>
    <DockTitle>Resource Browser</DockTitle>
    <ResTools>
      <svg width="22" height="22" viewBox="0 0 22 22"><path d="M.5 21.500l2-5.500L16.500 2l3.500 3.500L6 19.500z" fill="#f2b13c" stroke="#9a6414" /><path d="M.5 21.500l2-5.500 3.500 3.500z" fill="#e9cfa0" stroke="#666" strokeWidth="0.600" /><path d="M16 2.500l2-2q3 0 3.500 3.500l-2 2z" fill="#b9452c" stroke="#7c2a18" strokeWidth="0.600" /></svg>
      <svg width="21" height="21" viewBox="0 0 21 21"><path d="M10 1c3.300 0 5.600 1 7.200 2.800L20 1.500V10h-8.500l2.700-2.700C13.200 6.300 12 5.700 10.300 5.700c-3 0-4.800 2.100-4.800 4.800s2 4.800 4.800 4.800c1.700 0 3-.7 3.900-1.800h5C18 17.600 14.500 20 10.300 20 4.800 20 .8 16 .8 10.500S4.800 1 10 1z" fill="url(#green)" stroke="#2a7a34" strokeWidth="0.800" /></svg>
      <Spring />
      <Filter $w={225}>Filter</Filter>
    </ResTools>
    <Panes><Pane $w={254}>&lt;resource root&gt;</Pane><Pane $w={253} /></Panes>
    <Tabs><Tab $w={103}>Signal/Slot Editor</Tab><Tab $w={83}>Action Editor</Tab><Tab $w={113} $on>Resource Browser</Tab></Tabs>
  </Part>
);

export default function App() {
  return (
    <Screen>
      <GlobalStyle />
      <TaskBarView />
      <AppFrame>
        <TitleBar>
          <svg width="14" height="14" viewBox="0 0 14 14"><path d="M2.500 1H14v7l-2.500 2.500H0V3.500z" fill="#3fc955" /><text x="2.500" y="8.500" fontSize="8" fontWeight="700" letterSpacing="0" fontFamily="Open Sans, sans-serif" fill="#fff">Qt</text><path d="M2 10.500h11v2.500H2z" fill="#f0bf2a" /></svg>
          <span>Qt Designer</span>
          <Controls>
            <svg width="10" height="11" viewBox="0 0 10 11"><path d="M0 5.500h10" stroke="#000" /></svg>
            <svg width="11" height="11" viewBox="0 0 11 11"><path d="M.5 2.500h8v8h-8zM2.500 2.500v-2h8v8h-2" fill="none" stroke="#000" /></svg>
            <svg width="11" height="11" viewBox="0 0 11 11"><path d="M.5.5l10 10M10.500.5l-10 10" stroke="#000" strokeWidth="1.100" /></svg>
          </Controls>
        </TitleBar>
        <MenuBar>
          <MenuItem $w={34} $on><u>F</u>ile</MenuItem>
          <MenuItem $w={36}><u>E</u>dit</MenuItem>
          <MenuItem $w={44}>F<u>o</u>rm</MenuItem>
          <MenuItem $w={41}><u>V</u>iew</MenuItem>
          <MenuItem $w={58}><u>S</u>ettings</MenuItem>
          <MenuItem $w={60}><u>W</u>indow</MenuItem>
          <MenuItem $w={41}><u>H</u>elp</MenuItem>
        </MenuBar>
        <ToolRow>
          {toolGroups.map((g, i) => (
            <Group key={i} $last={i === 3}><Grip />{g.map((Icon, j) => <Tool key={j} $on={i === 2 && j === 0}><Icon s={24} /></Tool>)}</Group>
          ))}
        </ToolRow>
        <Main>
          <WidgetDock>
            <DockTitle>Widget Box</DockTitle>
            <FilterRow><Filter>Filter</Filter></FilterRow>
            <Box>
              <List>
                {widgets.map(([name, items], i) => (
                  <React.Fragment key={name}>
                    <Category $first={i === 0}><Chevron /><span>{name}</span></Category>
                    {items.map(([label, Icon]) => <Item key={label}><Icon />{label}</Item>)}
                  </React.Fragment>
                ))}
              </List>
              <ScrollBar thumb={576} />
            </Box>
          </WidgetDock>
          <Mdi>
            <Win>
              <WinTitle>
                <QtLogo>Qt</QtLogo><span>MainWindow - cryptoSample.ui</span>
                <WinBtn><svg width="10" height="5" viewBox="0 0 10 5"><rect x="0.500" y="0.500" width="9" height="4" fill="#fff" stroke="#555" /></svg></WinBtn>
                <WinBtn $red><svg width="12" height="10" viewBox="0 0 12 10"><path d="M2 1l8 8M10 1L2 9" stroke="#4a3030" strokeWidth="3.600" /><path d="M2.300 1.300l7.400 7.400M9.700 1.300L2.300 8.700" stroke="#fff" strokeWidth="2.200" /></svg></WinBtn>
              </WinTitle>
              <FormMenu><span>Type Here</span></FormMenu>
              <Canvas>
                <Heading>Tech Crew App</Heading>
                <Splitter>
                  <Label $h={15}>Username</Label><Field $h={25} />
                  <Label $h={16}>Password</Label><Field $h={26} />
                  <Enter>Enter</Enter>
                </Splitter>
              </Canvas>
              <FormStatus><svg width="8" height="8" viewBox="0 0 8 8"><path d="M6 0h2v2H6zM3 3h2v2H3zM6 3h2v2H6zM0 6h2v2H0zM3 6h2v2H3zM6 6h2v2H6z" fill="#bcbcbc" /></svg></FormStatus>
            </Win>
          </Mdi>
          <Right>
            <DockTitle>Object Inspector</DockTitle>
            <Tree>
              <List>
                <Head $w={166}><span>Object</span><span>Class</span></Head>
                {nodes.map(([n, c, h, ind, open, icon], i) => (
                  <Node key={n} $h={h} $in={ind} $sel={i === 0} $alt={i % 2 === 1}>
                    <NodeName $in={ind}>{open && <Chevron />}{icon}{n}</NodeName>{c}
                  </Node>
                ))}
              </List>
              <ScrollBar thumb={58} />
            </Tree>
            <PropertyPart />
            <ResourcePart />
          </Right>
        </Main>
        <StatusBar />
      </AppFrame>
      <Defs />
    </Screen>
  );
}
